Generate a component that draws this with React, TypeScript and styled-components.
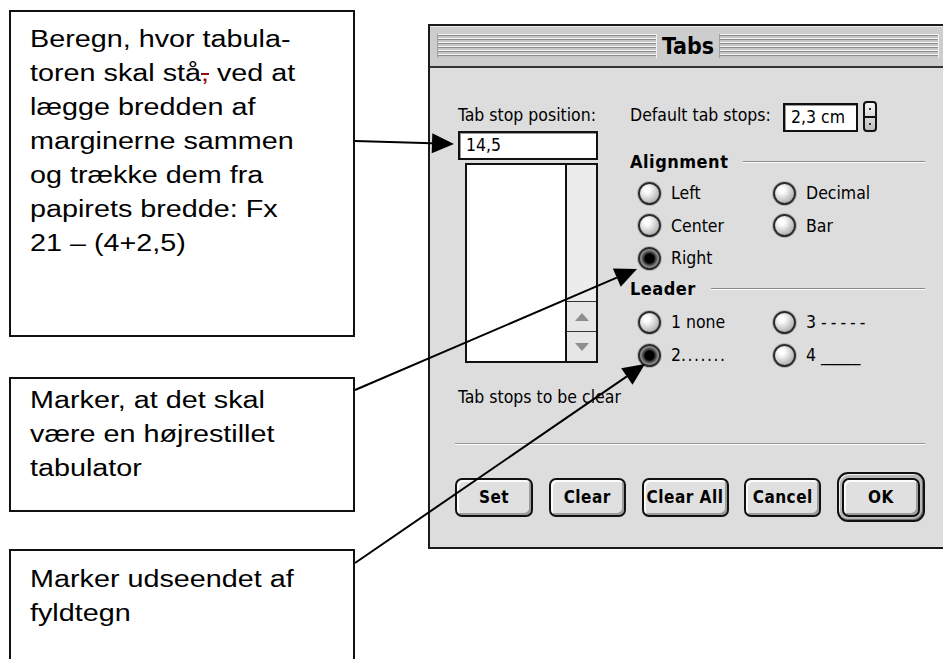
import styled, { createGlobalStyle } from "styled-components"

const macFont = `"DejaVu Sans Condensed", "Liberation Sans Narrow", "Arial Narrow", sans-serif`

const GlobalStyle = createGlobalStyle`
  html, body {
    margin: 0;
    padding: 0;
    background: #fff;
  }
  body {
    width: 943px;
    height: 659px;
    overflow: hidden;
    font-family: "Liberation Sans", Arial, sans-serif;
  }
`

const Page = styled.div`
  position: relative;
  width: 943px;
  height: 659px;
  overflow: hidden;
  display: flex;
  align-items: flex-start;
`

/* ---------- callout notes ---------- */

const Notes = styled.div`
  flex-shrink: 0;
  width: 346px;
  padding: 10px 0 0 9px;
  display: flex;
  flex-direction: column;
`

const Callout = styled.div<{ $h: number; $pt: number; $mt?: number }>`
  box-sizing: border-box;
  height: ${p => p.$h}px;
  margin-top: ${p => p.$mt ?? 0}px;
  border: 2px solid #111;
  padding: ${p => p.$pt}px 0 0 19px;
  background: #fff;
`

const CalloutText = styled.div`
  font-family: "Liberation Sans", Arial, sans-serif;
  font-size: 23px;
  line-height: 34px;
  color: #000;
  transform: scaleX(1.25);
  transform-origin: 0 0;
`

const Line = styled.div`
  white-space: nowrap;
`

const Deleted = styled.span`
  color: #8b1010;
  text-decoration: line-through;
  text-decoration-color: #8b1010;
`

/* ---------- dialog ---------- */

const Dialog = styled.div`
  box-sizing: border-box;
  flex-shrink: 0;
  margin: 24px 0 0 73px;
  width: 520px;
  height: 525px;
  border: 2px solid #1a1a1a;
  background: #dddddd;
  display: flex;
  flex-direction: column;
`

const TitleBar = styled.div`
  height: 40px;
  display: flex;
  align-items: center;
  gap: 5px;
  padding: 0 7px;
  background: #cdcdcd;
  border-bottom: 2px solid #333;
  box-shadow: inset 0 1px 0 #ececec;
`

const Stripes = styled.div`
  flex: 1;
  height: 24px;
  box-sizing: border-box;
  border-left: 1px solid #a0a0a0;
  border-right: 1px solid #f2f2f2;
  background: repeating-linear-gradient(
    to bottom,
    #f4f4f4 0 1px,
    #8e8e8e 1px 2px,
    #c6c6c6 2px 4px
  );
`

const Title = styled.div`
  font-family: ${macFont};
  font-weight: 700;
  font-size: 23px;
  line-height: 30px;
  color: #000;
`

const Body = styled.div`
  flex: 1;
  padding: 35px 21px 0 25px;
  display: flex;
  flex-direction: column;
  font-family: ${macFont};
  color: #000;
`

const TopGrid = styled.div`
  display: grid;
  grid-template-columns: 140px 1fr;
  column-gap: 32px;
  margin-left: 3px;
  align-items: start;
`

const Column = styled.div`
  display: flex;
  flex-direction: column;
`

const Label = styled.div<{ $mt?: number }>`
  font-size: 17.5px;
  line-height: 24px;
  white-space: nowrap;
  margin-top: ${p => p.$mt ?? 0}px;
`

const Field = styled.div<{ $mt?: number }>`
  box-sizing: border-box;
  height: 29px;
  margin-top: ${p => p.$mt ?? 0}px;
  background: #fff;
  border: 2px solid #111;
  box-shadow: inset 1px 1px 0 #9a9a9a;
  padding-left: 6px;
  font-size: 17.5px;
  line-height: 25px;
  white-space: nowrap;
`

const ListBox = styled.div`
  box-sizing: border-box;
  height: 200px;
  margin: 3px 0 0 7px;
  display: flex;
  border: 2px solid #111;
  background: #fff;
`

const ListArea = styled.div`
  flex: 1;
`

const ScrollBar = styled.div`
  width: 29px;
  border-left: 2px solid #111;
  background: #ececec;
  display: flex;
  flex-direction: column;
  justify-content: flex-end;
`

const ScrollArrow = styled.div`
  height: 29px;
  border-top: 1px solid #333;
  display: flex;
  align-items: center;
  justify-content: center;
  background: #e6e6e6;
`

const DefaultRow = styled.div`
  display: grid;
  grid-template-columns: 148px 75px 14px;
  column-gap: 5px;
  align-items: start;
`

const Spinner = styled.div`
  box-sizing: border-box;
  width: 14px;
  height: 31px;
  margin-top: -2px;
  border: 2px solid #111;
  border-radius: 4px;
  display: flex;
  flex-direction: column;
  background: linear-gradient(#f6f6f6, #bdbdbd);
`

const SpinHalf = styled.div`
  flex: 1;
  display: flex;
  align-items: center;
  justify-content: center;
  &:first-child {
    border-bottom: 2px solid #111;
  }
  &::after {
    content: "";
    width: 2px;
    height: 2px;
    background: #333;
  }
`

const Heading = styled.div<{ $mt: number }>`
  display: flex;
  align-items: center;
  margin-top: ${p => p.$mt}px;
  font-size: 18px;
  font-weight: 700;
  line-height: 24px;
  letter-spacing: 0.5px;
  &::after {
    content: "";
    flex: 1;
    margin-left: 15px;
    border-top: 1px solid #8a8a8a;
    border-bottom: 1px solid #fff;
  }
`

const RadioGrid = styled.div<{ $mt: number; $row: number }>`
  display: grid;
  grid-template-columns: 135px 1fr;
  grid-auto-rows: ${p => p.$row}px;
  margin-top: ${p => p.$mt}px;
  padding-left: 8px;
`

const RadioItem = styled.div`
  display: flex;
  align-items: center;
  gap: 10px;
  font-size: 17.5px;
  white-space: nowrap;
`

const RadioDot = styled.span<{ $on?: boolean }>`
  box-sizing: border-box;
  flex-shrink: 0;
  width: 23px;
  height: 23px;
  border-radius: 50%;
  border: 2px solid #2c2c2c;
  box-shadow: 0 0 0 1px rgba(0, 0, 0, 0.18);
  background: ${p =>
    p.$on
      ? "radial-gradient(circle, #000 0 34%, #2e2e2e 42%, #8a8a8a 64%, #d0d0d0 100%)"
      : "radial-gradient(circle at 36% 32%, #ffffff 0 14%, #e2e2e2 38%, #ababab 80%, #8c8c8c 100%)"};
`

const Spaced = styled.span<{ $ls: number }>`
  letter-spacing: ${p => p.$ls}px;
`

const Separator = styled.div`
  margin-top: 34px;
  border-top: 1px solid #959595;
  border-bottom: 1px solid #fff;
`

const ButtonRow = styled.div`
  margin-top: 27px;
  height: 50px;
  display: flex;
  align-items: center;
  justify-content: space-between;
`

const MacButton = styled.div<{ $w: number }>`
  box-sizing: border-box;
  width: ${p => p.$w}px;
  height: 39px;
  border: 2px solid #111;
  border-radius: 7px;
  background: #e0e0e0;
  box-shadow: inset 2px 2px 0 #fbfbfb, inset -2px -2px 0 #9c9c9c;
  display: flex;
  align-items: center;
  justify-content: center;
  font-family: ${macFont};
  font-size: 17px;
  font-weight: 700;
  letter-spacing: 0.5px;
  white-space: nowrap;
`

const DefaultRing = styled.div`
  box-sizing: border-box;
  width: 88px;
  height: 50px;
  padding: 3px;
  border: 2px solid #111;
  border-radius: 11px;
  background: #b8b8b8;
  box-shadow: inset 1px 1px 0 #efefef, inset -1px -1px 0 #6e6e6e;
  display: flex;
  align-items: center;
  justify-content: center;
`

/* ---------- arrows ---------- */

const Overlay = styled.svg`
  position: absolute;
  left: 0;
  top: 0;
  pointer-events: none;
`

type Arrow = { x1: number; y1: number; x2: number; y2: number }

const arrows: Arrow[] = [
  { x1: 355, y1: 141, x2: 454, y2: 144 },
  { x1: 355, y1: 390, x2: 637, y2: 269 },
  { x1: 355, y1: 563, x2: 645, y2: 364 },
]

const ArrowLine = ({ x1, y1, x2, y2 }: Arrow) => {
  const dx = x2 - x1
  const dy = y2 - y1
  const len = Math.hypot(dx, dy)
  const ux = dx / len
  const uy = dy / len
  const head = 22
  const half = 10
  const bx = x2 - ux * head
  const by = y2 - uy * head
  const pts = `${x2},${y2} ${bx - uy * half},${by + ux * half} ${bx + uy * half},${by - ux * half}`
  return (
    <g>
      <line x1={x1} y1={y1} x2={bx} y2={by} stroke="#000" strokeWidth={2} />
      <polygon points={pts} fill="#000" />
    </g>
  )
}

const Triangle = ({ up }: { up?: boolean }) => (
  <svg width="14" height="8" viewBox="0 0 14 8">
    <polygon points={up ? "0,8 14,8 7,0" : "0,0 14,0 7,8"} fill="#8e8e8e" />
  </svg>
)

const Radio = ({ on, children }: { on?: boolean; children: React.ReactNode }) => (
  <RadioItem>
    <RadioDot $on={on} />
    <span>{children}</span>
  </RadioItem>
)

const App = () => {
  return (
    <Page>
      <GlobalStyle />
      <Notes>
        <Callout $h={327} $pt={10}>
          <CalloutText>
            <Line>Beregn, hvor tabula-</Line>
            <Line>
              toren skal stå<Deleted>,</Deleted> ved at
            </Line>
            <Line>lægge bredden af</Line>
            <Line>marginerne sammen</Line>
            <Line>og trække dem fra</Line>
            <Line>papirets bredde: Fx</Line>
            <Line>21 – (4+2,5)</Line>
          </CalloutText>
        </Callout>
        <Callout $h={135} $pt={4} $mt={40}>
          <CalloutText>
            <Line>Marker, at det skal</Line>
            <Line>være en højrestillet</Line>
            <Line>tabulator</Line>
          </CalloutText>
        </Callout>
        <Callout $h={160} $pt={11} $mt={37}>
          <CalloutText>
            <Line>Marker udseendet af</Line>
            <Line>fyldtegn</Line>
          </CalloutText>
        </Callout>
      </Notes>

      <Dialog>
        <TitleBar>
          <Stripes />
          <Title>Tabs</Title>
          <Stripes />
        </TitleBar>
        <Body>
          <TopGrid>
            <Column>
              <Label>Tab stop position:</Label>
              <Field $mt={4}>14,5</Field>
              <ListBox>
                <ListArea />
                <ScrollBar>
                  <ScrollArrow>
                    <Triangle up />
                  </ScrollArrow>
                  <ScrollArrow>
                    <Triangle />
                  </ScrollArrow>
                </ScrollBar>
              </ListBox>
              <Label $mt={22}>Tab stops to be clear</Label>
            </Column>
            <Column>
              <DefaultRow>
                <Label>Default tab stops:</Label>
                <Field>2,3 cm</Field>
                <Spinner>
                  <SpinHalf />
                  <SpinHalf />
                </Spinner>
              </DefaultRow>
              <Heading $mt={18}>Alignment</Heading>
              <RadioGrid $mt={3} $row={32.5}>
                <Radio>Left</Radio>
                <Radio>Decimal</Radio>
                <Radio>Center</Radio>
                <Radio>Bar</Radio>
                <Radio on>Right</Radio>
              </RadioGrid>
              <Heading $mt={2}>Leader</Heading>
              <RadioGrid $mt={5} $row={33}>
                <Radio>1 none</Radio>
                <Radio>
                  3 <Spaced $ls={4}>-----</Spaced>
                </Radio>
                <Radio on>
                  2<Spaced $ls={1.5}>.......</Spaced>
                </Radio>
                <Radio>4 _____</Radio>
              </RadioGrid>
            </Column>
          </TopGrid>
          <Separator />
          <ButtonRow>
            <MacButton $w={78}>Set</MacButton>
            <MacButton $w={77}>Clear</MacButton>
            <MacButton $w={87}>Clear All</MacButton>
            <MacButton $w={77}>Cancel</MacButton>
            <DefaultRing>
              <MacButton $w={78}>OK</MacButton>
            </DefaultRing>
          </ButtonRow>
        </Body>
      </Dialog>

      <Overlay width={943} height={659} viewBox="0 0 943 659">
        {arrows.map((a, i) => (
          <ArrowLine key={i} {...a} />
        ))}
      </Overlay>
    </Page>
  )
}

export default App
